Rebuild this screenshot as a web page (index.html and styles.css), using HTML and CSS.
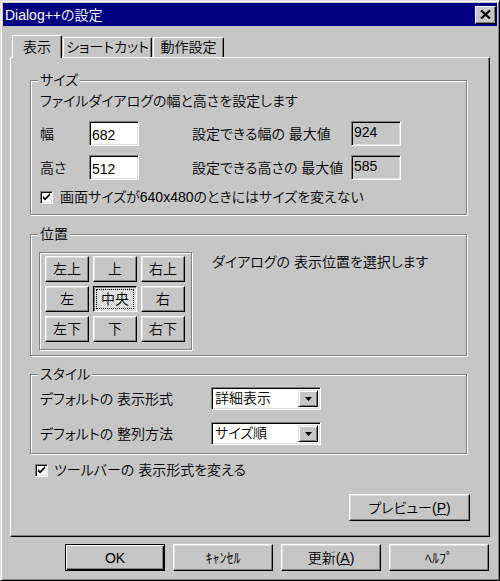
FILE: index.html
```html
<!DOCTYPE html>
<html lang="ja">
<head>
    <meta charset="UTF-8">
    <title>Dialog++の設定</title>
    <link rel="stylesheet" href="styles.css">
</head>
<body>

    <div class="window">
        <div class="titlebar">
            <span class="title">Dialog++の設定</span>
            <button type="button" class="close">
                <svg width="11" height="9" viewBox="0 0 11 9"><path d="M1 0.5 L10 8.5 M10 0.5 L1 8.5" stroke="#000" stroke-width="2.2" fill="none"/></svg>
            </button>
        </div>

        <div class="tabs">
            <div class="tab active tab-view">表示</div>
            <div class="tab tab-short">ショートカット</div>
            <div class="tab tab-action">動作設定</div>
        </div>

        <div class="panel">
            <div class="group group-size">
                <span class="group-label">サイズ</span>
                <div class="desc">ファイルダイアログの幅と高さを設定します</div>
                <div class="size-row">
                    <label class="size-label" for="width">幅</label>
                    <input type="text" id="width" class="edit" value="682">
                    <span class="max-label">設定できる幅の 最大値</span>
                    <span class="edit readonly">924</span>
                </div>
                <div class="size-row">
                    <label class="size-label" for="height">高さ</label>
                    <input type="text" id="height" class="edit" value="512">
                    <span class="max-label">設定できる高さの 最大値</span>
                    <span class="edit readonly">585</span>
                </div>
                <div class="check-row">
                    <span class="checkbox"><svg width="9" height="9" viewBox="0 0 9 9"><path d="M1 3 V5.5 L3 7.5 L8 2.5 V0 L3 5 Z" fill="#000"/></svg></span>
                    <span>画面サイズが640x480のときにはサイズを変えない</span>
                </div>
            </div>

            <div class="group group-pos">
                <span class="group-label">位置</span>
                <div class="pos-body">
                    <div class="pos-grid">
                        <button type="button" class="btn pos-btn">左上</button>
                        <button type="button" class="btn pos-btn">上</button>
                        <button type="button" class="btn pos-btn">右上</button>
                        <button type="button" class="btn pos-btn">左</button>
                        <button type="button" class="btn pos-btn pressed">中央</button>
                        <button type="button" class="btn pos-btn">右</button>
                        <button type="button" class="btn pos-btn">左下</button>
                        <button type="button" class="btn pos-btn">下</button>
                        <button type="button" class="btn pos-btn">右下</button>
                    </div>
                    <div class="pos-desc">ダイアログの 表示位置を選択します</div>
                </div>
            </div>

            <div class="group group-style">
                <span class="group-label">スタイル</span>
                <div class="style-row">
                    <span class="style-label">デフォルトの 表示形式</span>
                    <div class="select">
                        <span class="select-text">詳細表示</span>
                        <span class="select-btn"><svg width="7" height="4" viewBox="0 0 7 4"><path d="M0 0 H7 L3.5 4 Z" fill="#000"/></svg></span>
                    </div>
                </div>
                <div class="style-row">
                    <span class="style-label">デフォルトの 整列方法</span>
                    <div class="select">
                        <span class="select-text">サイズ順</span>
                        <span class="select-btn"><svg width="7" height="4" viewBox="0 0 7 4"><path d="M0 0 H7 L3.5 4 Z" fill="#000"/></svg></span>
                    </div>
                </div>
            </div>

            <div class="check-row toolbar-check">
                <span class="checkbox"><svg width="9" height="9" viewBox="0 0 9 9"><path d="M1 3 V5.5 L3 7.5 L8 2.5 V0 L3 5 Z" fill="#000"/></svg></span>
                <span>ツールバーの 表示形式を変える</span>
            </div>

            <div class="preview-row">
                <button type="button" class="btn preview">プレビュー(<u>P</u>)</button>
            </div>
        </div>

        <div class="actions">
            <button type="button" class="btn action default">OK</button>
            <button type="button" class="btn action">ｷｬﾝｾﾙ</button>
            <button type="button" class="btn action">更新(<u>A</u>)</button>
            <button type="button" class="btn action">ﾍﾙﾌﾟ</button>
        </div>
    </div>

</body>
</html>
```

FILE: styles.css
```css
* {
    box-sizing: border-box;
}

body {
    margin: 0;
    background: #c6c6c6;
    font-family: "Liberation Sans", "Noto Sans CJK JP", sans-serif;
    font-size: 14px;
    font-weight: 350;
    font-feature-settings: "palt";
    line-height: 16px;
    color: #000;
    white-space: nowrap;
}

button, input {
    font: inherit;
    color: inherit;
}

.window {
    width: 500px;
    height: 581px;
    padding: 2px;
    border: 1px solid;
    border-color: #dfdfdf #000 #000 #dfdfdf;
    box-shadow: inset 1px 1px #fff, inset -1px -1px #808080;
}

.titlebar {
    height: 23px;
    background: #000080;
    color: #fff;
    display: flex;
    align-items: center;
    justify-content: space-between;
    padding: 0 1px 0 2px;
}

.close {
    width: 21px;
    height: 18px;
    padding: 0;
    display: flex;
    align-items: center;
    justify-content: center;
    background: #c6c6c6;
    border: 1px solid;
    border-color: #fff #000 #000 #fff;
    box-shadow: inset -1px -1px #808080;
}

/* tabs */
.tabs {
    display: flex;
    align-items: flex-end;
    gap: 1px;
    height: 22px;
    margin: 9px 0 0 9px;
    position: relative;
    z-index: 1;
}

.tab {
    height: 20px;
    padding-top: 1px;
    text-align: center;
    border: 1px solid;
    border-bottom: none;
    border-color: #fff #000 #000 #fff;
    border-radius: 2px 2px 0 0;
    box-shadow: inset -1px 0 #808080;
}

.tab.active {
    height: 23px;
    padding-top: 3px;
    margin-bottom: -1px;
    background: #c6c6c6;
}

.tab-view { width: 50px; }
.tab-short { width: 89px; }
.tab-action { width: 71px; }

.panel {
    width: 480px;
    height: 480px;
    margin-left: 7px;
    padding: 22px 21px 0 19px;
    border: 1px solid;
    border-color: #fff #000 #000 #fff;
    box-shadow: inset -1px -1px #808080;
}

/* group boxes */
.group {
    position: relative;
    width: 437px;
    border: 1px solid #808080;
    box-shadow: inset 1px 1px #fff, 1px 1px #fff;
    padding-left: 9px;
}

.group-label {
    position: absolute;
    top: -9px;
    left: 7px;
    padding: 0 2px;
    background: #c6c6c6;
}

.group-size {
    padding-top: 12px;
    padding-bottom: 9px;
}

.desc {
    margin-bottom: 12px;
}

.size-row {
    display: flex;
    align-items: center;
    margin-bottom: 9px;
}

.size-label {
    width: 49px;
}

.edit {
    display: block;
    width: 50px;
    height: 25px;
    padding: 2px 0 0 2px;
    background: #fff;
    border: 1px solid;
    border-color: #808080 #fff #fff #808080;
    box-shadow: inset 1px 1px #000, inset -1px -1px #dfdfdf;
    outline: none;
}

.edit.readonly {
    background: #c6c6c6;
}

.max-label {
    width: 159px;
    margin-left: 53px;
}

.check-row {
    display: flex;
    align-items: center;
    gap: 7px;
    height: 16px;
}

.checkbox {
    width: 13px;
    height: 13px;
    display: flex;
    align-items: center;
    justify-content: center;
    background: #fff;
    border: 1px solid;
    border-color: #808080 #fff #fff #808080;
    box-shadow: inset 1px 1px #000, inset -1px -1px #dfdfdf;
}

.group-pos {
    margin-top: 19px;
    padding-top: 17px;
    padding-bottom: 5px;
    padding-left: 8px;
}

.pos-body {
    display: flex;
    align-items: flex-start;
}

.pos-grid {
    display: grid;
    grid-template-columns: repeat(3, 44px);
    grid-auto-rows: 26px;
    gap: 4px;
    padding: 3px 6px 7px 5px;
    border: 1px solid #808080;
    box-shadow: inset 1px 1px #fff, 1px 1px #fff;
}

.pos-desc {
    margin: 2px 0 0 20px;
}

.btn {
    padding: 0;
    background: #c6c6c6;
    border: 1px solid;
    border-color: #fff #000 #000 #fff;
    box-shadow: inset -1px -1px #808080, inset 1px 1px #dfdfdf;
}

.pos-btn.pressed {
    border-color: #000 #fff #fff #000;
    box-shadow: inset 1px 1px #808080;
    background: repeating-conic-gradient(#fff 0 25%, #c6c6c6 0 50%) 0 0 / 2px 2px;
    outline: 1px dotted #000;
    outline-offset: -4px;
}

.group-style {
    margin-top: 18px;
    padding-top: 12px;
    padding-bottom: 8px;
}

.style-row {
    display: flex;
    align-items: center;
}

.style-row + .style-row {
    margin-top: 12px;
}

.style-label {
    width: 171px;
}

.select {
    width: 110px;
    height: 23px;
    display: flex;
    padding: 2px;
    background: #fff;
    border: 1px solid;
    border-color: #808080 #fff #fff #808080;
    box-shadow: inset 1px 1px #000, inset -1px -1px #dfdfdf;
}

.select-text {
    flex: 1;
    padding-left: 1px;
}

.select-btn {
    width: 20px;
    display: flex;
    align-items: center;
    justify-content: center;
    background: #c6c6c6;
    border: 1px solid;
    border-color: #dfdfdf #000 #000 #dfdfdf;
    box-shadow: inset 1px 1px #fff, inset -1px -1px #808080;
}

.toolbar-check {
    margin: 8px 0 0 5px;
    gap: 6px;
}

.preview-row {
    display: flex;
    justify-content: flex-end;
    margin: 16px -2px 0 0;
}

.preview {
    width: 121px;
    height: 27px;
}

/* bottom buttons */
.actions {
    display: flex;
    justify-content: flex-end;
    gap: 8px;
    width: 480px;
    margin: 7px 0 0 7px;
    padding-right: 1px;
}

.action {
    width: 100px;
    height: 27px;
}

.action.default {
    border: 1px solid #000;
    box-shadow: inset 1px 1px #fff, inset -1px -1px #000, inset -2px -2px #808080;
}
```
